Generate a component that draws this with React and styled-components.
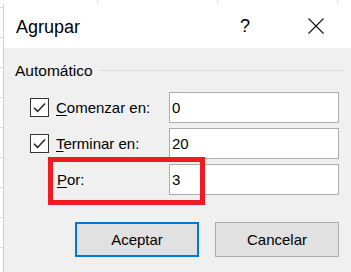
import React from 'react';
import styled, { createGlobalStyle } from 'styled-components';

const GlobalStyle = createGlobalStyle`
  html, body {
    margin: 0;
    padding: 0;
  }
  body {
    font-family: "Liberation Sans", Arial, sans-serif;
    color: #000;
    background: #fff;
  }
`

const Sheet = styled.div`
  width: 351px;
  height: 272px;
  overflow: hidden;
  box-sizing: border-box;
  padding: 4px 0 0 3px;
  background-color: #fff;
  background-image:
    linear-gradient(to right, #dedede 1px, transparent 1px),
    linear-gradient(to bottom, #dedede 1px, transparent 1px);
  background-size: 120px 30px;
  background-position: 97px 7px;
`

const Dialog = styled.div`
  position: relative;
  width: 348px;
  height: 268px;
  box-sizing: border-box;
  background: #f0f0f0;
  border-left: 1px solid #cfcfcf;
`

const TitleBar = styled.div`
  height: 44px;
  background: #fff;
  display: flex;
  align-items: center;
  padding-left: 12px;
  padding-right: 18px;
`

const Title = styled.div`
  flex: 1;
  font-size: 18px;
  line-height: 22px;
  margin-top: 2px;
`

const TitleButton = styled.div`
  width: 34px;
  height: 44px;
  display: flex;
  align-items: center;
  justify-content: center;
  font-size: 18px;
  margin-left: ${p => p.$gap || 0}px;
`

const Body = styled.div`
  padding-top: 14px;
`

const GroupHeader = styled.div`
  display: flex;
  align-items: center;
  padding-left: 11px;
  padding-right: 7px;
  font-size: 15.5px;
  line-height: 18px;
`

const GroupLine = styled.div`
  flex: 1;
  height: 1px;
  background: #dcdcdc;
  margin-left: 6px;
  margin-top: -1px;
`

const Fields = styled.div`
  display: grid;
  grid-template-columns: 26px 113px 170px;
  grid-auto-rows: 31px;
  row-gap: 5px;
  padding-left: 26px;
  margin-top: 12px;
`

const CheckCell = styled.div`
  display: flex;
  align-items: center;
`

const Box = styled.div`
  width: 19px;
  height: 19px;
  box-sizing: border-box;
  border: 1px solid #333;
  background: #fff;
  display: flex;
  align-items: center;
  justify-content: center;
`

const Label = styled.div`
  display: flex;
  align-items: center;
  font-size: 15px;
  padding-left: ${p => p.$indent || 0}px;
  u {
    text-decoration-thickness: 1px;
    text-underline-offset: 2px;
  }
`

const Input = styled.div`
  box-sizing: border-box;
  border: 1px solid #acacac;
  background: #fff;
  display: flex;
  align-items: center;
  padding-left: 2px;
  font-size: 15px;
`

const Highlight = styled.div`
  position: absolute;
  left: 44px;
  top: 153px;
  width: 157px;
  height: 48px;
  box-sizing: border-box;
  border: 5px solid #ed1c24;
`

const Buttons = styled.div`
  display: flex;
  justify-content: flex-end;
  gap: 16px;
  padding-right: 12px;
  margin-top: 27px;
`

const Button = styled.div`
  width: 124px;
  height: 35px;
  box-sizing: border-box;
  background: #e1e1e1;
  border: ${p => (p.$default ? '2px solid #0078d7' : '1px solid #adadad')};
  display: flex;
  align-items: center;
  justify-content: center;
  font-size: 15px;
`

function Check() {
  return (
    <svg width="17" height="17" viewBox="0 0 17 17">
      <path d="M3 8.8 L6.6 12.4 L14 4.6" fill="none" stroke="#222" strokeWidth="1.5" />
    </svg>
  );
}

function CloseIcon() {
  return (
    <svg width="16" height="16" viewBox="0 0 16 16">
      <path d="M0.5 0.5 L15.5 15.5 M15.5 0.5 L0.5 15.5" stroke="#111" strokeWidth="1.1" />
    </svg>
  );
}

export default function App() {
  return (
    <>
      <GlobalStyle />
      <Sheet>
        <Dialog>
          <TitleBar>
            <Title>Agrupar</Title>
            <TitleButton>?</TitleButton>
            <TitleButton $gap={37}>
              <CloseIcon />
            </TitleButton>
          </TitleBar>
          <Body>
            <GroupHeader>
              Automático
              <GroupLine />
            </GroupHeader>
            <Fields>
              <CheckCell><Box><Check /></Box></CheckCell>
              <Label><span><u>C</u>omenzar en:</span></Label>
              <Input>0</Input>

              <CheckCell><Box><Check /></Box></CheckCell>
              <Label><span><u>T</u>erminar en:</span></Label>
              <Input>20</Input>

              <CheckCell />
              <Label $indent={1}><span><u>P</u>or:</span></Label>
              <Input>3</Input>
            </Fields>
            <Buttons>
              <Button $default>Aceptar</Button>
              <Button>Cancelar</Button>
            </Buttons>
          </Body>
          <Highlight />
        </Dialog>
      </Sheet>
    </>
  );
}
